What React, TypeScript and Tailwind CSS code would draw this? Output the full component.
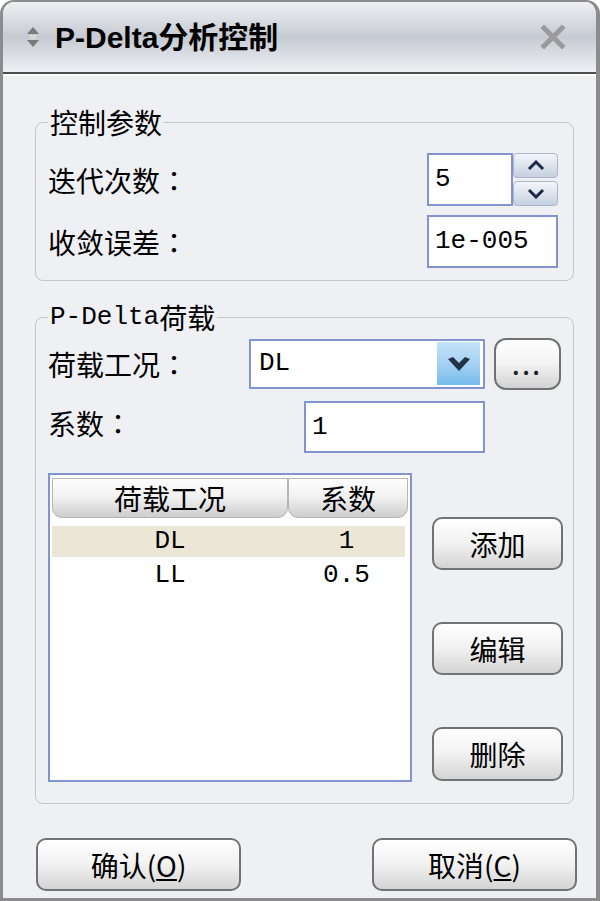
import React from "react"

const cjk = "font-['Noto_Sans_CJK_SC','Noto_Sans_CJK_JP',sans-serif]"
const mono = "font-['Liberation_Mono','Noto_Sans_CJK_SC',monospace]"
const colon = "font-['Noto_Sans_CJK_JP',sans-serif]"

const btnClass =
  "flex items-center justify-center rounded-[10px] border-2 border-[#727272] bg-linear-to-b from-[#ffffff] via-[#f1f1f1] to-[#d4d4d4] text-[28px] leading-none text-black"

function TitleIcon() {
  return (
    <svg width="16" height="24" viewBox="0 0 16 24">
      <path d="M8 2 L14 9 L2 9 Z" fill="#7a7a7a" />
      <path d="M8 22 L14 15 L2 15 Z" fill="#7a7a7a" />
      <rect x="5" y="10" width="6" height="4" fill="#d8d8d8" />
    </svg>
  )
}

function CloseIcon() {
  return (
    <svg width="26" height="24" viewBox="0 0 26 24">
      <path d="M4 3 L22 21 M22 3 L4 21" stroke="#9a9a9a" strokeWidth="5" strokeLinecap="square" />
    </svg>
  )
}

function Caret({ up }: { up?: boolean }) {
  return (
    <svg width="18" height="11" viewBox="0 0 18 11">
      <path
        d={up ? "M2 9 L9 2 L16 9" : "M2 2 L9 9 L16 2"}
        stroke="#1c2a4a"
        strokeWidth="3"
        fill="none"
      />
    </svg>
  )
}

function Label({ text, className = "" }: { text: string; className?: string }) {
  return (
    <span className={`text-[28px] leading-none text-black ${className}`}>
      {text}
      <span className={colon}>：</span>
    </span>
  )
}

function Field({ value, className }: { value: string; className: string }) {
  return (
    <div
      className={`flex items-center border-2 border-[#8393d0] bg-white pl-[6px] text-[26px] text-black ${mono} ${className}`}
    >
      {value}
    </div>
  )
}

export default function App() {
  return (
    <div className="flex h-[901px] w-[600px] flex-col overflow-hidden rounded-t-[14px] border-t-2 border-r-[4px] border-b-[3px] border-l-[3px] border-[#8c8c8c] bg-[#eff0f3]">
      {/* title bar */}
      <div className="flex h-[72px] shrink-0 items-center border-b-2 border-[#4e4e4e] bg-linear-to-b from-[#eef0f3] via-[#c6cad2] to-[#eef0f4] pr-[30px] pl-[22px]">
        <TitleIcon />
        <span className="ml-[14px] text-[30px] font-bold text-black font-['Liberation_Sans','Noto_Sans_CJK_SC',sans-serif]">
          P-Delta分析控制
        </span>
        <span className="ml-auto">
          <CloseIcon />
        </span>
      </div>
      <div className="h-[2px] bg-white" />

      <div className={`flex flex-1 flex-col pr-[22px] pl-[32px] ${cjk}`}>
        {/* 控制参数 */}
        <fieldset className="mt-[30px] rounded-[8px] border border-[#c3c6ce] pr-[15px] pb-[12px] pl-[12px]">
          <legend className="px-[2px] text-[28px] leading-[32px] text-black">控制参数</legend>
          <div className="mt-[15px] flex h-[53px] items-center justify-between">
            <Label text="迭代次数" />
            <div className="flex">
              <Field value="5" className="h-[53px] w-[86px]" />
              <div className="flex w-[45px] flex-col gap-[3px]">
                <div className="flex h-[25px] items-center justify-center rounded-[4px] border border-[#a9b5cc] bg-linear-to-b from-[#f4f6fa] to-[#c6d0e0]">
                  <Caret up />
                </div>
                <div className="flex h-[25px] items-center justify-center rounded-[4px] border border-[#a9b5cc] bg-linear-to-b from-[#f4f6fa] to-[#c6d0e0]">
                  <Caret />
                </div>
              </div>
            </div>
          </div>
          <div className="mt-[9px] flex h-[53px] items-center justify-between">
            <Label text="收敛误差" />
            <Field value="1e-005" className="h-[53px] w-[131px]" />
          </div>
        </fieldset>

        {/* P-Delta荷载 */}
        <fieldset className="mt-[20px] rounded-[8px] border border-[#c3c6ce] pb-[21px] pl-[12px]">
          <legend className="h-[32px] px-[2px] text-[28px] leading-[32px] text-black">
            <span className={`align-top text-[26px] leading-[32px] ${mono}`}>P-Delta</span>
            <span className="align-top leading-[32px]">荷载</span>
          </legend>
          <div className="mt-[4px] flex h-[53px] items-center">
            <Label text="荷载工况" className="w-[201px]" />
            <div className="flex h-[50px] w-[236px] items-center border-2 border-[#8393d0] bg-white pl-[8px]">
              <span className={`text-[26px] text-black ${mono}`}>DL</span>
              <div className="mr-[3px] ml-auto flex h-[43px] w-[43px] items-center justify-center bg-linear-to-b from-[#c4e2f8] via-[#a5d2f3] to-[#74bcec]">
                <svg width="24" height="16" viewBox="0 0 24 16">
                  <path d="M1 3 L6 1 L12 7 L18 1 L23 3 L12 15 Z" fill="#243245" />
                </svg>
              </div>
            </div>
            <div className="ml-[9px] flex h-[52px] w-[67px] items-end justify-center rounded-[12px] border-2 border-[#727272] bg-linear-to-b from-[#ffffff] via-[#f3f3f3] to-[#d2d2d2] pb-[12px]">
              <span className="text-[22px] leading-none font-bold tracking-[3px] text-[#222]">...</span>
            </div>
          </div>
          <div className="mt-[11px] flex h-[52px] items-center">
            <Label text="系数" className="-mt-[8px] w-[256px]" />
            <Field value="1" className="h-[52px] w-[181px]" />
          </div>

          <div className="mt-[20px] flex">
            <div className="h-[309px] w-[364px] border-2 border-[#8393d0] bg-white px-[2px] pt-[3px]">
              <div className="flex h-[40px]">
                <div className="flex w-[236px] items-center justify-center rounded-b-[10px] border border-[#b5b5b5] bg-linear-to-b from-[#fdfdfd] via-[#f0f0f0] to-[#cdcdcd] text-[28px] leading-none text-black">
                  荷载工况
                </div>
                <div className="flex w-[120px] items-center justify-center rounded-b-[10px] border border-[#b5b5b5] bg-linear-to-b from-[#fdfdfd] via-[#f0f0f0] to-[#cdcdcd] text-[28px] leading-none text-black">
                  系数
                </div>
              </div>
              <div className={`mt-[8px] flex h-[31px] w-[353px] items-center bg-[#ebe6d5] text-[26px] text-black ${mono}`}>
                <span className="w-[236px] text-center">DL</span>
                <span className="w-[117px] text-center">1</span>
              </div>
              <div className={`mt-[3px] flex h-[31px] w-[353px] items-center text-[26px] text-black ${mono}`}>
                <span className="w-[236px] text-center">LL</span>
                <span className="w-[117px] text-center">0.5</span>
              </div>
            </div>
            <div className="ml-[20px] flex flex-col gap-[52px] pt-[44px]">
              <div className={`h-[53px] w-[131px] ${btnClass}`}>添加</div>
              <div className={`h-[53px] w-[131px] ${btnClass}`}>编辑</div>
              <div className={`h-[54px] w-[131px] ${btnClass}`}>删除</div>
            </div>
          </div>
        </fieldset>

        <div className="mt-[34px] mr-[-3px] ml-[1px] flex justify-between">
          <div className={`h-[53px] w-[205px] ${btnClass}`}>
            确认(<span className="underline">O</span>)
          </div>
          <div className={`h-[53px] w-[205px] ${btnClass}`}>
            取消(<span className="underline">C</span>)
          </div>
        </div>
      </div>
    </div>
  )
}
